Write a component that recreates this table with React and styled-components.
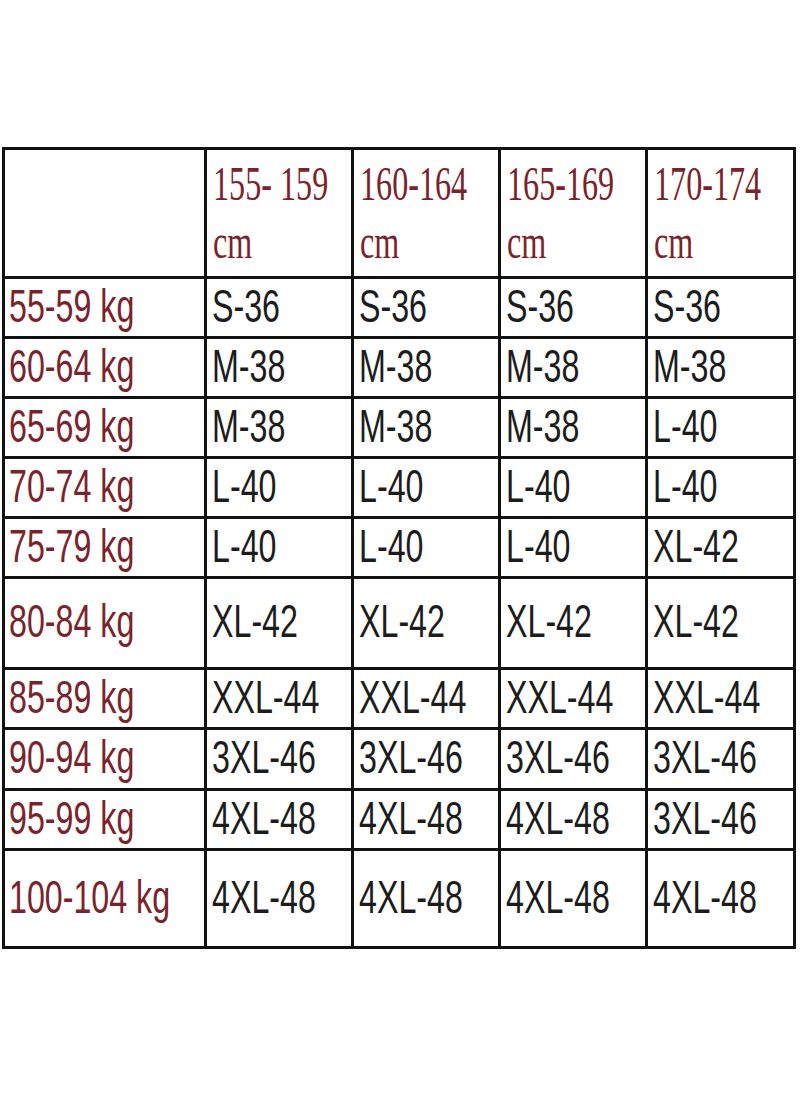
import React from 'react'
import styled, { createGlobalStyle } from 'styled-components'

const GlobalStyle = createGlobalStyle`
  body {
    margin: 0;
    background: #ffffff;
  }
`;

const Page = styled.div`
  width: 800px;
  height: 1096px;
  padding-top: 147px;
  padding-left: 2px;
  box-sizing: border-box;
  background: #ffffff;
`;

const Grid = styled.div`
  display: grid;
  grid-template-columns: 199px 144px 144px 144px 145px;
  grid-template-rows: 126px 57px 57px 57px 57px 57px 88px 57px 58px 57px 95px;
  gap: 3px;
  padding: 3px;
  width: 794px;
  box-sizing: border-box;
  background: #121212;
`;

const Cell = styled.div`
  background: #ffffff;
  overflow: hidden;
  display: flex;
  align-items: center;
  padding: 0 0 3px ${(p) => (p.$label ? '4px' : '5px')};
  box-sizing: border-box;
`;

const HeadCell = styled.div`
  background: #ffffff;
  overflow: hidden;
  padding: 5px 0 0 6px;
  box-sizing: border-box;
`;

const HeadText = styled.div`
  font-family: "Liberation Serif", "Times New Roman", serif;
  font-size: 48px;
  line-height: 58px;
  color: #7a232c;
  white-space: nowrap;
  transform: scaleX(0.67);
  transform-origin: left top;
`;

const Text = styled.span`
  display: inline-block;
  font-family: "Liberation Sans", Arial, sans-serif;
  font-size: 46px;
  line-height: 1.15;
  white-space: nowrap;
  color: ${(p) => (p.$red ? '#7a232c' : '#1c1c1c')};
  transform: scaleX(0.7);
  transform-origin: left center;
`;

const heights = ['155- 159', '160-164', '165-169', '170-174'];

const rows = [
  ['55-59 kg', 'S-36', 'S-36', 'S-36', 'S-36'],
  ['60-64 kg', 'M-38', 'M-38', 'M-38', 'M-38'],
  ['65-69 kg', 'M-38', 'M-38', 'M-38', 'L-40'],
  ['70-74 kg', 'L-40', 'L-40', 'L-40', 'L-40'],
  ['75-79 kg', 'L-40', 'L-40', 'L-40', 'XL-42'],
  ['80-84 kg', 'XL-42', 'XL-42', 'XL-42', 'XL-42'],
  ['85-89 kg', 'XXL-44', 'XXL-44', 'XXL-44', 'XXL-44'],
  ['90-94 kg', '3XL-46', '3XL-46', '3XL-46', '3XL-46'],
  ['95-99 kg', '4XL-48', '4XL-48', '4XL-48', '3XL-46'],
  ['100-104 kg', '4XL-48', '4XL-48', '4XL-48', '4XL-48'],
];

function App() {
  return (
    <Page>
      <GlobalStyle />
      <Grid>
        <HeadCell />
        {heights.map((h) => (
          <HeadCell key={h}>
            <HeadText>{h}</HeadText>
            <HeadText>cm</HeadText>
          </HeadCell>
        ))}
        {rows.map((row) =>
          row.map((val, i) => (
            <Cell key={row[0] + i} $label={i === 0}>
              <Text $red={i === 0}>{val}</Text>
            </Cell>
          ))
        )}
      </Grid>
    </Page>
  )
}

export default App
